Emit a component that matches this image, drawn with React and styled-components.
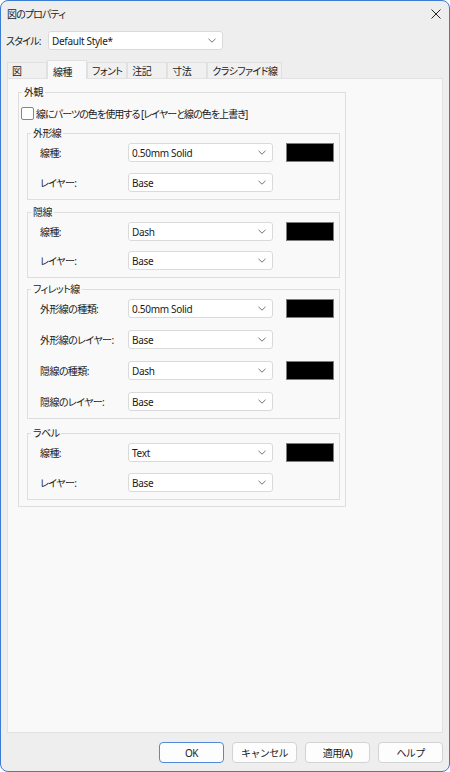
import React from 'react'
import styled, { createGlobalStyle } from 'styled-components'

const GlobalStyle = createGlobalStyle`
  html,
  body {
    margin: 0;
    padding: 0;
    background: #fff;
  }
  body {
    font-family: "Noto Sans", "Noto Sans CJK JP", sans-serif;
    font-size: 10px;
    letter-spacing: -0.3px;
    color: #1b1b1b;
    font-feature-settings: "palt" 1;
    font-variant-east-asian: proportional-width;
  }
  * {
    box-sizing: border-box;
  }
`

const Window = styled.div`
  width: 450px;
  height: 772px;
  border: 1px solid #3b7bd2;
  border-radius: 8px;
  background: #eeeeee;
  display: flex;
  flex-direction: column;
  overflow: hidden;
`

const TitleBar = styled.div`
  height: 25px;
  display: flex;
  align-items: center;
  justify-content: space-between;
  padding: 0 7px 0 6px;
  span {
    letter-spacing: -0.9px;
  }
`

const CloseButton = styled.div`
  width: 12px;
  height: 12px;
  display: flex;
  align-items: center;
  justify-content: center;
`

const StyleRow = styled.div`
  margin-top: 5px;
  display: flex;
  align-items: center;
  padding-left: 5px;
  label {
    width: 42px;
    letter-spacing: -0.8px;
  }
`

const Combo = styled.div`
  width: ${(p) => p.$width}px;
  height: 19px;
  display: flex;
  align-items: center;
  justify-content: space-between;
  background: #fff;
  border: 1px solid #dadada;
  border-radius: 3px;
  padding: 0 6px 0 3px;
  color: #1a1a1a;
`

const TabRow = styled.div`
  margin-top: 10px;
  height: 18px;
  display: flex;
  align-items: flex-end;
  padding-left: 6px;
`

const Tab = styled.div`
  position: relative;
  min-width: 40px;
  height: ${(p) => (p.$active ? 19 : 16)}px;
  margin-bottom: ${(p) => (p.$active ? -1 : 0)}px;
  padding: ${(p) => (p.$active ? '2px 5px 0' : '0 4px')};
  display: flex;
  align-items: center;
  letter-spacing: -0.6px;
  background: ${(p) => (p.$active ? '#f9f9f9' : '#f0f0f0')};
  border: 1px solid #e0e0e0;
  border-bottom: none;
  z-index: ${(p) => (p.$active ? 1 : 0)};
`

const Panel = styled.div`
  flex: 1;
  margin: 0 6px;
  background: #f9f9f9;
  border: 1px solid #e2e2e2;
  padding: 6px 10px 0;
`

const Group = styled.fieldset`
  margin: ${(p) => p.$mt || 0}px 0 0 ${(p) => p.$ml || 0}px;
  padding: 0;
  min-width: 0;
  width: ${(p) => p.$width}px;
  border: 1px solid #dedede;
  legend {
    margin-left: 3px;
    padding: 0 2px;
    line-height: 14px;
    letter-spacing: -0.6px;
  }
`

const GroupBody = styled.div`
  display: flex;
  flex-direction: column;
  gap: ${(p) => p.$gap || 0}px;
  padding: ${(p) => p.$pad};
`

const CheckRow = styled.div`
  height: 16px;
  display: flex;
  align-items: center;
  gap: 2px;
  span + span {
    letter-spacing: -0.95px;
  }
`

const CheckBox = styled.span`
  width: 13px;
  height: 13px;
  background: #fff;
  border: 1px solid #858585;
  border-radius: 2px;
`

const FieldRow = styled.div`
  display: grid;
  grid-template-columns: 75px 145px 48px;
  column-gap: 13px;
  align-items: center;
  height: 19px;
`

const FieldLabel = styled.span`
  white-space: nowrap;
  letter-spacing: -0.6px;
`

const Swatch = styled.div`
  height: 19px;
  background: #000;
  border: 1px solid #7d7d7d;
`

const Footer = styled.div`
  display: flex;
  justify-content: flex-end;
  gap: 8px;
  padding: 9px 6px 8px;
`

const Button = styled.button`
  width: 65px;
  height: 21px;
  padding: 0;
  font-family: inherit;
  font-size: 10px;
  letter-spacing: -0.6px;
  color: #1b1b1b;
  background: #fdfdfd;
  border: 1px solid ${(p) => (p.$primary ? '#4f8ad8' : '#d3d3d3')};
  border-radius: 4px;
`

const Chevron = () => (
  <svg width="8" height="5" viewBox="0 0 8 5">
    <path d="M0.5 0.8 L4 4.2 L7.5 0.8" fill="none" stroke="#707070" strokeWidth="1" />
  </svg>
)

const Select = ({ value, width = 145 }) => (
  <Combo $width={width}>
    <span>{value}</span>
    <Chevron />
  </Combo>
)

const Field = ({ label, value, color }) => (
  <FieldRow>
    <FieldLabel>{label}</FieldLabel>
    <Select value={value} />
    {color && <Swatch />}
  </FieldRow>
)

const tabs = ['図', '線種', 'フォント', '注記', '寸法', 'クラシファイド線']

const groups = [
  {
    title: '外形線',
    mt: 5,
    gap: 11,
    fields: [
      { label: '線種:', value: '0.50mm Solid', color: true },
      { label: 'レイヤー:', value: 'Base' },
    ],
  },
  {
    title: '隠線',
    mt: 5,
    gap: 10,
    fields: [
      { label: '線種:', value: 'Dash', color: true },
      { label: 'レイヤー:', value: 'Base' },
    ],
  },
  {
    title: 'フィレット線',
    mt: 4,
    gap: 12,
    fields: [
      { label: '外形線の種類:', value: '0.50mm Solid', color: true },
      { label: '外形線のレイヤー:', value: 'Base' },
      { label: '隠線の種類:', value: 'Dash', color: true },
      { label: '隠線のレイヤー:', value: 'Base' },
    ],
  },
  {
    title: 'ラベル',
    mt: 7,
    gap: 11,
    fields: [
      { label: '線種:', value: 'Text', color: true },
      { label: 'レイヤー:', value: 'Base' },
    ],
  },
]

export default function App() {
  return (
    <>
      <GlobalStyle />
      <Window>
        <TitleBar>
          <span>図のプロパティ</span>
          <CloseButton>
            <svg width="10" height="10" viewBox="0 0 10 10">
              <path d="M0.5 0.5 L9.5 9.5 M9.5 0.5 L0.5 9.5" stroke="#222" strokeWidth="1" />
            </svg>
          </CloseButton>
        </TitleBar>

        <StyleRow>
          <label>スタイル:</label>
          <Select value="Default Style*" width={175} />
        </StyleRow>

        <TabRow>
          {tabs.map((t) => (
            <Tab key={t} $active={t === '線種'}>
              {t}
            </Tab>
          ))}
        </TabRow>

        <Panel>
          <Group $width={328}>
            <legend>外観</legend>
            <GroupBody $pad="6px 5px 6px 2px">
              <CheckRow>
                <CheckBox />
                <span>線にパーツの色を使用する [レイヤーと線の色を上書き]</span>
              </CheckRow>
              {groups.map((g) => (
                <Group key={g.title} $width={313} $mt={g.mt} $ml={6}>
                  <legend>{g.title}</legend>
                  <GroupBody $pad="3px 0 7px 12px" $gap={g.gap}>
                    {g.fields.map((f) => (
                      <Field key={f.label} {...f} />
                    ))}
                  </GroupBody>
                </Group>
              ))}
            </GroupBody>
          </Group>
        </Panel>

        <Footer>
          <Button $primary>OK</Button>
          <Button>キャンセル</Button>
          <Button>適用(A)</Button>
          <Button>ヘルプ</Button>
        </Footer>
      </Window>
    </>
  )
}
